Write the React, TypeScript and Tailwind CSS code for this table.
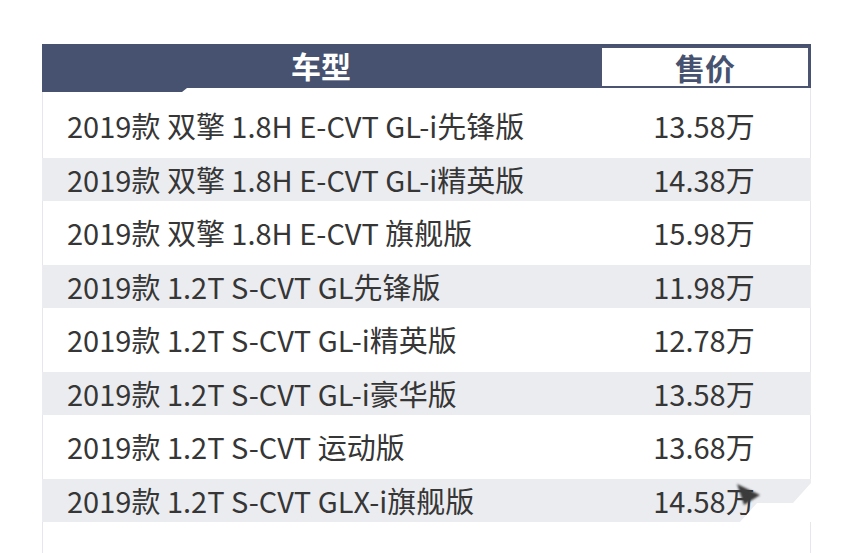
import React from "react";

const rows: [string, string][] = [
  ["2019款 双擎 1.8H E-CVT GL-i先锋版", "13.58万"],
  ["2019款 双擎 1.8H E-CVT GL-i精英版", "14.38万"],
  ["2019款 双擎 1.8H E-CVT 旗舰版", "15.98万"],
  ["2019款 1.2T S-CVT GL先锋版", "11.98万"],
  ["2019款 1.2T S-CVT GL-i精英版", "12.78万"],
  ["2019款 1.2T S-CVT GL-i豪华版", "13.58万"],
  ["2019款 1.2T S-CVT 运动版", "13.68万"],
  ["2019款 1.2T S-CVT GLX-i旗舰版", "14.58万"],
];

export default function App() {
  return (
    <div
      className="w-[852px] h-[553px] bg-white overflow-hidden pt-[44px] pl-[42px]"
      style={{ fontFamily: '"Noto Sans CJK SC", "Noto Sans", sans-serif' }}
    >
      <div className="w-[769px]">
        <div className="flex h-[44px] bg-[#46526f]">
          <div className="flex-1 flex items-center justify-center text-white font-bold text-[30px] leading-none pb-[2px]">
            车型
          </div>
          <div className="w-[210px] mt-[2px] mr-[1px] h-[42px] border-2 border-[#4b5470] bg-white flex items-center justify-center text-[#46526f] font-bold text-[30px] leading-none">
            售价
          </div>
        </div>
        <div className="w-[145px] h-[4px] bg-[#46526f] [clip-path:polygon(0_0,100%_0,calc(100%-5px)_100%,0_100%)]"></div>
        <div className="h-[480px] border-x border-[#e6e7eb] pt-[16.5px] flex flex-col gap-[11px] -mt-[4px]">
          {rows.map(([name, price], i) => (
            <div
              key={i}
              className={`relative h-[42.5px] -mx-px flex items-center text-[29px] text-[#363636] ${
                i % 2 === 1 ? "bg-[#ebecf0]" : ""
              }`}
            >
              <div className="flex-1 pl-[25px] whitespace-nowrap">{name}</div>
              <div className="w-[210px] text-center whitespace-nowrap pr-[4px]">{price}</div>
              {i === 7 && (
                <svg
                  className="absolute left-[688px] top-0"
                  width="81"
                  height="43"
                  viewBox="0 0 81 43"
                >
                  <defs>
                    <filter id="blr" x="-20%" y="-20%" width="140%" height="140%">
                      <feGaussianBlur stdDeviation="1.2" />
                    </filter>
                  </defs>
                  <polygon points="10,43 27,24 63,24 81,4 81,43" fill="#ffffff" />
                  <polygon points="7,5 30,16 14,26" fill="#3a3a3a" filter="url(#blr)" />
                </svg>
              )}
            </div>
          ))}
        </div>
      </div>
    </div>
  );
}
